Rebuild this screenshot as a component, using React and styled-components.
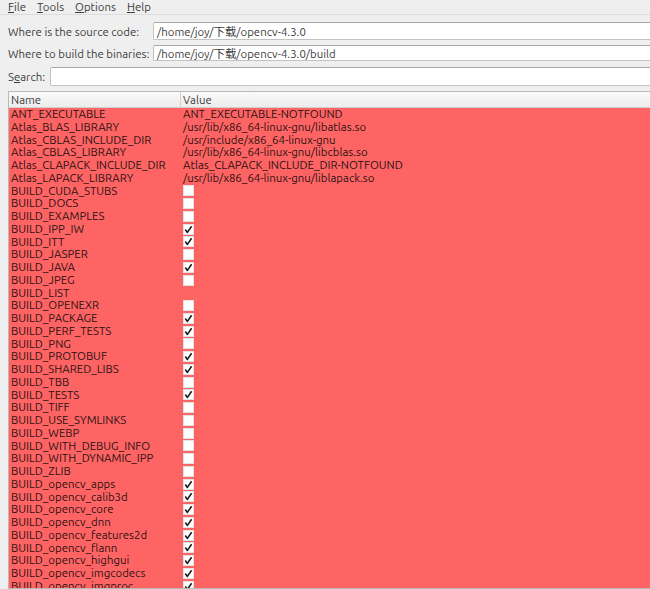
import React from "react";
import styled, { createGlobalStyle } from "styled-components";

const GlobalStyle = createGlobalStyle`
  html, body {
    margin: 0;
    padding: 0;
    overflow: hidden;
    background: #efefef;
  }
  body {
    font-family: "Ubuntu", "Open Sans", "Noto Sans CJK SC", sans-serif;
    font-size: 11.4px;
    color: #3c3c3c;
  }
`;

const entries = [
  ["ANT_EXECUTABLE", "ANT_EXECUTABLE-NOTFOUND"],
  ["Atlas_BLAS_LIBRARY", "/usr/lib/x86_64-linux-gnu/libatlas.so"],
  ["Atlas_CBLAS_INCLUDE_DIR", "/usr/include/x86_64-linux-gnu"],
  ["Atlas_CBLAS_LIBRARY", "/usr/lib/x86_64-linux-gnu/libcblas.so"],
  ["Atlas_CLAPACK_INCLUDE_DIR", "Atlas_CLAPACK_INCLUDE_DIR-NOTFOUND"],
  ["Atlas_LAPACK_LIBRARY", "/usr/lib/x86_64-linux-gnu/liblapack.so"],
  ["BUILD_CUDA_STUBS", false],
  ["BUILD_DOCS", false],
  ["BUILD_EXAMPLES", false],
  ["BUILD_IPP_IW", true],
  ["BUILD_ITT", true],
  ["BUILD_JASPER", false],
  ["BUILD_JAVA", true],
  ["BUILD_JPEG", false],
  ["BUILD_LIST", ""],
  ["BUILD_OPENEXR", false],
  ["BUILD_PACKAGE", true],
  ["BUILD_PERF_TESTS", true],
  ["BUILD_PNG", false],
  ["BUILD_PROTOBUF", true],
  ["BUILD_SHARED_LIBS", true],
  ["BUILD_TBB", false],
  ["BUILD_TESTS", true],
  ["BUILD_TIFF", false],
  ["BUILD_USE_SYMLINKS", false],
  ["BUILD_WEBP", false],
  ["BUILD_WITH_DEBUG_INFO", false],
  ["BUILD_WITH_DYNAMIC_IPP", false],
  ["BUILD_ZLIB", false],
  ["BUILD_opencv_apps", true],
  ["BUILD_opencv_calib3d", true],
  ["BUILD_opencv_core", true],
  ["BUILD_opencv_dnn", true],
  ["BUILD_opencv_features2d", true],
  ["BUILD_opencv_flann", true],
  ["BUILD_opencv_highgui", true],
  ["BUILD_opencv_imgcodecs", true],
  ["BUILD_opencv_imgproc", true],
];

const Window = styled.div`
  width: 680px;
  height: 589px;
  display: flex;
  flex-direction: column;
  overflow: hidden;
`;

const MenuBar = styled.div`
  height: 15px;
  display: flex;
  align-items: center;
  padding-left: 8px;
  gap: 11px;
  border-bottom: 1px solid #dcdcdc;
  box-sizing: border-box;
`;

const MenuItem = styled.span`
  color: #3c3c3c;
  line-height: 14px;
  u {
    text-decoration-thickness: 1px;
    text-underline-offset: 1px;
  }
`;

const Form = styled.div`
  display: flex;
  flex-direction: column;
  padding: 7px 0 0 8px;
`;

const FieldRow = styled.div`
  display: flex;
  align-items: center;
  height: ${(p) => p.$h}px;
  margin-bottom: ${(p) => p.$gap}px;
`;

const Label = styled.label`
  width: ${(p) => p.$w}px;
  flex: none;
  white-space: nowrap;
  color: #3c3c3c;
`;

const Input = styled.div`
  flex: 1;
  height: 100%;
  box-sizing: border-box;
  background: #fff;
  border: 1px solid #c2c2c2;
  border-top-color: #a9a9a9;
  border-right: none;
  border-radius: 2px 0 0 2px;
  padding-left: 3px;
  display: flex;
  align-items: center;
  white-space: nowrap;
  color: #3c3c3c;
`;

const Table = styled.div`
  margin-top: 5px;
  border: 1px solid #b9b9b9;
  border-right: none;
  margin-left: 8px;
  flex: 1;
  display: flex;
  flex-direction: column;
  overflow: hidden;
`;

const HeaderRow = styled.div`
  display: flex;
  height: 15px;
  flex: none;
  background: linear-gradient(#fafafa, #ececec);
  border-bottom: 1px solid #d0d0d0;
`;

const HeaderCell = styled.div`
  width: ${(p) => (p.$w ? `${p.$w}px` : "auto")};
  flex: ${(p) => (p.$w ? "none" : 1)};
  box-sizing: border-box;
  padding-left: 2px;
  line-height: 15px;
  border-right: ${(p) => (p.$w ? "1px solid #d0d0d0" : "none")};
  color: #3c3c3c;
`;

const Row = styled.div`
  display: flex;
  flex: none;
  height: 12.75px;
  background: #ff6464;
  align-items: center;
  color: #2a1212;
`;

const NameCell = styled.div`
  width: 170px;
  flex: none;
  padding-left: 2px;
  white-space: nowrap;
  line-height: 12.75px;
`;

const ValueCell = styled.div`
  flex: 1;
  padding-left: 2px;
  white-space: nowrap;
  line-height: 12.75px;
  display: flex;
  align-items: center;
`;

const Box = styled.span`
  width: 11px;
  height: 11px;
  box-sizing: border-box;
  background: #fff;
  border: 1px solid #e2e2e2;
  display: flex;
  align-items: center;
  justify-content: center;
  svg {
    display: block;
  }
`;

function Check({ on }) {
  return (
    <Box>
      {on && (
        <svg width="9" height="9" viewBox="0 0 9 9">
          <path
            d="M1.3 4.6 L3.4 7.4 L7.6 1.2"
            fill="none"
            stroke="#1a1a1a"
            strokeWidth="1.6"
            strokeLinejoin="round"
          />
        </svg>
      )}
    </Box>
  );
}

export default function App() {
  return (
    <>
      <GlobalStyle />
      <Window>
        <MenuBar>
          <MenuItem>
            <u>F</u>ile
          </MenuItem>
          <MenuItem>
            <u>T</u>ools
          </MenuItem>
          <MenuItem>
            <u>O</u>ptions
          </MenuItem>
          <MenuItem>
            <u>H</u>elp
          </MenuItem>
        </MenuBar>
        <Form>
          <FieldRow $h={18} $gap={5}>
            <Label $w={145}>Where is the source code:</Label>
            <Input>/home/joy/下载/opencv-4.3.0</Input>
          </FieldRow>
          <FieldRow $h={16} $gap={6}>
            <Label $w={145}>Where to build the binaries:</Label>
            <Input>/home/joy/下载/opencv-4.3.0/build</Input>
          </FieldRow>
          <FieldRow $h={19} $gap={0}>
            <Label $w={42}>
              S<u>e</u>arch:
            </Label>
            <Input />
          </FieldRow>
        </Form>
        <Table>
          <HeaderRow>
            <HeaderCell $w={172}>Name</HeaderCell>
            <HeaderCell>Value</HeaderCell>
          </HeaderRow>
          {entries.map(([name, value]) => (
            <Row key={name}>
              <NameCell>{name}</NameCell>
              <ValueCell>
                {typeof value === "boolean" ? <Check on={value} /> : value}
              </ValueCell>
            </Row>
          ))}
        </Table>
      </Window>
    </>
  );
}
